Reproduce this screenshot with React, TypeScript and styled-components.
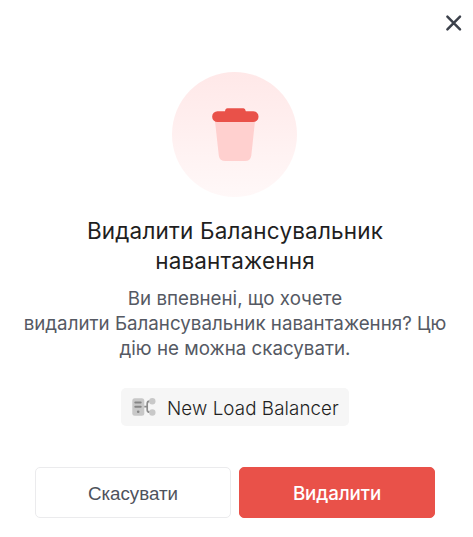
import React from "react";
import styled, { createGlobalStyle } from "styled-components";

const GlobalStyle = createGlobalStyle`
  *, *::before, *::after { box-sizing: border-box; }
  body { margin: 0; background: #fff; font-family: Inter, sans-serif; overflow: hidden; }
`;

const Dialog = styled.section`
  display: flex;
  flex-direction: column;
  align-items: center;
  width: 470px;
  height: 537px;
  background: #fff;
`;

const Header = styled.header`
  align-self: stretch;
  display: flex;
  justify-content: flex-end;
  height: 72px;
  padding: 13px 6px 0 0;
`;

const CloseButton = styled.button`
  display: block;
  width: 20px;
  height: 20px;
  padding: 0;
  border: 0;
  background: none;
  svg { display: block; }
`;

const IconCircle = styled.div`
  display: flex;
  align-items: center;
  justify-content: center;
  width: 125px;
  height: 125px;
  margin-right: 1px;
  border-radius: 50%;
  background: linear-gradient(180deg, #ffe8e8 0%, #fff8f8 100%);
  svg { display: block; }
`;

const Title = styled.h2`
  margin: 19px 0 0;
  font-size: 22.5px;
  line-height: 30px;
  font-weight: 400;
  letter-spacing: 0.17px;
  color: #1f1f1f;
  text-align: center;
  white-space: nowrap;
`;

const Message = styled.p`
  margin: 10px 0 0;
  font-size: 18.75px;
  line-height: 25px;
  font-weight: 400;
  color: #555963;
  text-align: center;
  white-space: nowrap;
`;

const Resource = styled.div`
  display: flex;
  align-items: center;
  gap: 11px;
  width: 228px;
  height: 38px;
  margin-top: 27px;
  padding-left: 11px;
  border-radius: 5px;
  background: #f6f6f6;
  svg { display: block; flex: none; }
`;

const ResourceName = styled.span`
  padding-top: 2px;
  font-size: 18.75px;
  line-height: 25px;
  font-weight: 300;
  letter-spacing: 0.09px;
  color: #1f1f1f;
  white-space: nowrap;
`;

const Actions = styled.footer`
  display: grid;
  grid-template-columns: 196px 196px;
  gap: 8px;
  margin-top: 41px;
`;

const Button = styled.button<{ $danger?: boolean }>`
  height: 51px;
  padding: 1px 0 0;
  border: 1px solid ${(p) => (p.$danger ? "#e95149" : "#ebebed")};
  border-radius: 5px;
  background: ${(p) => (p.$danger ? "#e95149" : "#fff")};
  color: ${(p) => (p.$danger ? "#fff" : "#4e525c")};
  font-family: ${(p) => (p.$danger ? "Inter, sans-serif" : '"Liberation Sans", sans-serif')};
  font-size: 18.75px;
  font-weight: ${(p) => (p.$danger ? 500 : 400)};
  letter-spacing: ${(p) => (p.$danger ? "-0.1px" : "0")};
  line-height: 25px;
`;

const CloseIcon = () => (
  <svg width="20" height="20" viewBox="0 0 20 20" fill="none">
    <path d="M3.4 3.7 16 16.3M16 3.7 3.4 16.3" stroke="#3c414b" strokeWidth="2.5" strokeLinecap="round" />
  </svg>
);

const TrashIcon = () => (
  <svg width="125" height="125" viewBox="0 0 125 125">
    <path d="M43 49H83L79.3 83.5Q78.500 89 73 89H53.5Q47.500 89 46.800 83.500Z" fill="#ffd0cf" />
    <path d="M45.500 39.300H53Q53.300 36.300 55.500 36.300H71.500Q73.300 36.300 73.800 39.300H81.200A5.350 5.350 0 0 1 81.200 50H45.500A5.350 5.350 0 0 1 45.500 39.300Z" fill="#e95149" />
  </svg>
);

const BalancerIcon = () => (
  <svg width="24" height="20" viewBox="0 0 24 20" fill="none">
    <rect x="0.300" y="1.200" width="12" height="17.500" rx="2.500" fill="#c8c8c8" />
    <path d="M3.300 5.500H8.700M3.300 9.700H8.700" stroke="#858585" strokeWidth="2" strokeLinecap="round" />
    <circle cx="6.200" cy="14.700" r="1.300" fill="#858585" />
    <path d="M12.300 9.700H15.200M19 4.200H17.700Q15.200 4.200 15.200 6.700V12.700Q15.200 15.200 17.700 15.200H19" stroke="#8c8c8c" strokeWidth="1.700" />
    <circle cx="20.300" cy="4.200" r="3.200" fill="#c8c8c8" />
    <circle cx="20.300" cy="15.500" r="3.200" fill="#c8c8c8" />
  </svg>
);

export default function App() {
  return (
    <>
      <GlobalStyle />
      <Dialog role="dialog">
        <Header>
          <CloseButton aria-label="Закрити"><CloseIcon /></CloseButton>
        </Header>
        <IconCircle><TrashIcon /></IconCircle>
        <Title>Видалити Балансувальник<br />навантаження</Title>
        <Message>
          Ви впевнені, що хочете<br />
          видалити Балансувальник навантаження? Цю<br />
          дію не можна скасувати.
        </Message>
        <Resource>
          <BalancerIcon />
          <ResourceName>New Load Balancer</ResourceName>
        </Resource>
        <Actions>
          <Button>Скасувати</Button>
          <Button $danger>Видалити</Button>
        </Actions>
      </Dialog>
    </>
  );
}
